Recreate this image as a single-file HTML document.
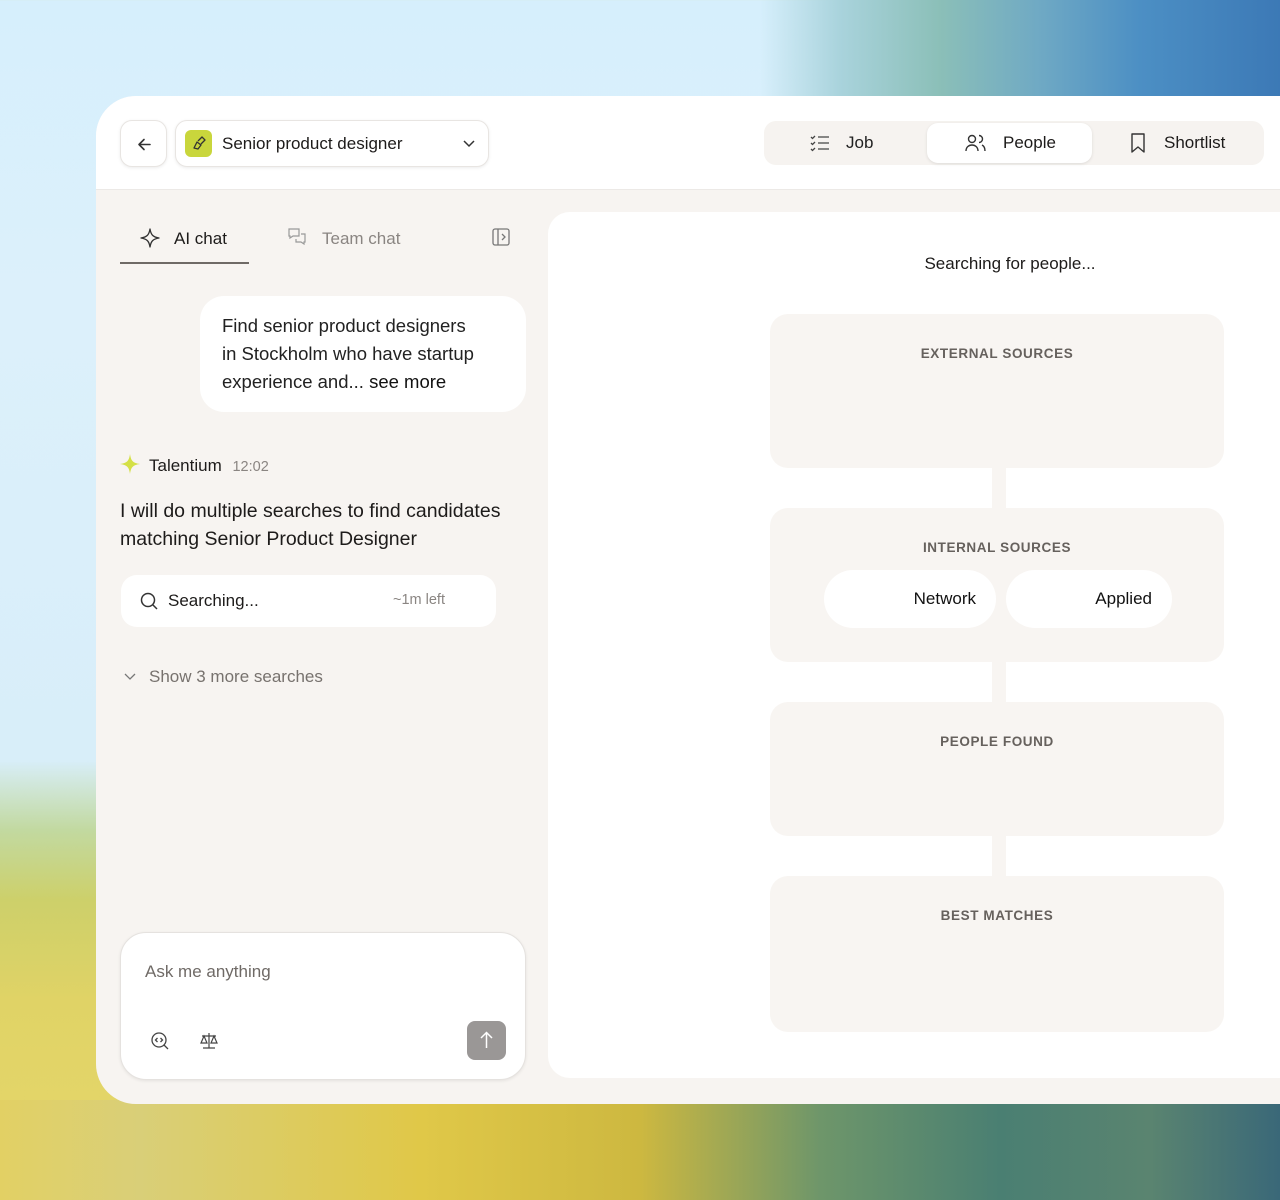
<!DOCTYPE html>
<html><head><style>
*{box-sizing:border-box;margin:0;padding:0}
body{width:1280px;height:1200px;overflow:hidden;position:relative;font-family:"Liberation Sans",sans-serif;color:#1d1b1a;
background:linear-gradient(180deg,#d6effc 0px,#dcf0fb 300px,#d8eef9 760px,#c2d9a0 830px,#cdd06a 900px,#e0d366 1000px,#e6d76a 1200px);}
.bgtop{position:absolute;left:760px;top:0;width:520px;height:100px;background:linear-gradient(90deg,rgba(216,238,250,0) 0,#a9d3dc 80px,#8bbfb8 180px,#6fa9c4 280px,#4c8fc4 380px,#3c79b6 520px)}
.bgbot{position:absolute;left:0;top:1100px;width:1280px;height:100px;background:linear-gradient(90deg,#e2d064 0,#d9cf78 140px,#e0c848 420px,#cdb840 640px,#6e966a 820px,#4a7f72 1000px,#5a8470 1150px,#3a6878 1280px)}
.card{position:absolute;left:96px;top:96px;width:1200px;height:1008px;background:#f7f4f1;border-radius:40px 0 0 40px;overflow:hidden}
.hdr{position:absolute;left:0;top:0;width:100%;height:94px;background:#fff;border-bottom:1px solid #ece9e6}
.btn{position:absolute;background:#fff;border:1px solid #e8e5e2;box-shadow:0 1px 3px rgba(0,0,0,.08)}
.tabs{position:absolute;left:668px;top:25px;width:500px;height:44px;background:#f6f3f0;border-radius:12px}
.tab{position:absolute;top:2px;height:40px;display:flex;align-items:center;font-size:17px}
.right{position:absolute;left:452px;top:116px;width:760px;height:866px;background:#fff;border-radius:22px}
.box{position:absolute;left:222px;width:454px;background:#f8f5f2;border-radius:18px;text-align:center;font-size:13.5px;letter-spacing:.6px;color:#66615d;font-weight:bold}
.conn{position:absolute;left:444px;width:14px;background:#f8f5f2}
.pill{position:absolute;top:62px;height:58px;background:#fff;border-radius:29px;font-size:17px;color:#111;font-weight:normal;letter-spacing:0;display:flex;align-items:center;justify-content:flex-end;padding-right:20px}
</style></head><body>
<div class="bgtop"></div><div class="bgbot"></div>
<div class="card">
 <div class="hdr">
  <div class="btn" style="left:24px;top:24px;width:47px;height:47px;border-radius:12px">
   <svg width="47" height="47" viewBox="0 0 47 47"><path d="M29 23.5H18M23 18.5l-5 5 5 5" stroke="#333" stroke-width="1.6" fill="none" stroke-linecap="round" stroke-linejoin="round"/></svg></div>
  <div class="btn" style="left:79px;top:24px;width:314px;height:47px;border-radius:12px">
   <div style="position:absolute;left:9px;top:9px;width:27px;height:27px;background:#c9d63c;border-radius:6px">
    <svg width="27" height="27" viewBox="0 0 27 27"><path d="M9 18l3-6 4 3-3 4zM13 11l4-4 3 3-4 4" stroke="#333" stroke-width="1.3" fill="none" stroke-linejoin="round"/></svg></div>
   <div style="position:absolute;left:46px;top:13px;font-size:17px">Senior product designer</div>
   <svg style="position:absolute;left:286px;top:15px" width="14" height="14" viewBox="0 0 14 14"><path d="M2 5l5 5 5-5" stroke="#333" stroke-width="1.5" fill="none"/></svg>
  </div>
  <div class="tabs">
   <div class="tab" style="left:46px;color:#222"><svg width="20" height="18" viewBox="0 0 20 18" style="margin-right:16px"><path d="M8 3h11M8 9h11M8 15h11M1 3l1.5 1.5L5 2M1 9l1.5 1.5L5 8M1 15l1.5 1.5L5 14" stroke="#444" stroke-width="1.3" fill="none"/></svg>Job</div>
   <div class="tab" style="left:163px;width:165px;background:#fff;border-radius:11px;box-shadow:0 1px 3px rgba(0,0,0,.1);padding-left:38px"><svg width="22" height="18" viewBox="0 0 22 18" style="margin-right:16px"><circle cx="7" cy="5" r="3.5" stroke="#333" stroke-width="1.4" fill="none"/><path d="M1 17c0-4 3-6 6-6s6 2 6 6M14 1.5a3.5 3.5 0 010 7M17 11c2 1 3 3 3 6" stroke="#333" stroke-width="1.4" fill="none"/></svg>People</div>
   <div class="tab" style="left:366px"><svg width="16" height="20" viewBox="0 0 16 20" style="margin-right:18px"><path d="M2 1h12v18l-6-5-6 5z" stroke="#333" stroke-width="1.4" fill="none" stroke-linejoin="round"/></svg>Shortlist</div>
  </div>
 </div>
 <svg style="position:absolute;left:44px;top:132px" width="20" height="20" viewBox="0 0 20 20"><path d="M10 1C11 7 13 9 19 10 13 11 11 13 10 19 9 13 7 11 1 10 7 9 9 7 10 1z" stroke="#333" stroke-width="1.3" fill="none" stroke-linejoin="round"/></svg>
 <div style="position:absolute;left:78px;top:133px;font-size:17px">AI chat</div>
 <div style="position:absolute;left:24px;top:166px;width:129px;height:2px;background:#6f6a66"></div>
 <svg style="position:absolute;left:191px;top:131px" width="20" height="20" viewBox="0 0 20 20"><path d="M2 2h10v7H6l-3 2V9H2zM14 7h4v8h-1v2l-3-2H9v-3" stroke="#999" stroke-width="1.2" fill="none"/></svg>
 <div style="position:absolute;left:226px;top:133px;font-size:17px;color:#8a8582">Team chat</div>
 <svg style="position:absolute;left:396px;top:132px" width="18" height="18" viewBox="0 0 18 18"><rect x="1" y="1" width="16" height="16" rx="2" stroke="#777" stroke-width="1.3" fill="none"/><path d="M6 1v16M10 6l3 3-3 3" stroke="#777" stroke-width="1.3" fill="none"/></svg>
 <div style="position:absolute;left:104px;top:200px;width:326px;height:116px;background:#fff;border-radius:24px;padding:16px 22px;font-size:18.5px;line-height:28px;color:#222;white-space:nowrap">Find senior product designers<br>in Stockholm who have startup<br>experience and... <span style="color:#111">see more</span></div>
 <svg style="position:absolute;left:24px;top:358px" width="20" height="20" viewBox="0 0 20 20"><path d="M10 0C11 7 13 9 20 10 13 11 11 13 10 20 9 13 7 11 0 10 7 9 9 7 10 0z" fill="#d4e046"/></svg>
 <div style="position:absolute;left:53px;top:360px;font-size:17px">Talentium <span style="font-size:14.5px;color:#8a8582;margin-left:6px">12:02</span></div>
 <div style="position:absolute;left:24px;top:401px;width:420px;font-size:19.5px;line-height:28px;color:#1d1b1a">I will do multiple searches to find candidates matching Senior Product Designer</div>
 <div style="position:absolute;left:25px;top:479px;width:375px;height:52px;background:#fff;border-radius:16px">
  <svg style="position:absolute;left:19px;top:17px" width="18" height="18" viewBox="0 0 18 18"><circle cx="8" cy="8" r="6.5" stroke="#333" stroke-width="1.5" fill="none"/><path d="M13 13l4 4" stroke="#333" stroke-width="1.5"/></svg>
  <div style="position:absolute;left:47px;top:16px;font-size:17px">Searching...</div>
  <div style="position:absolute;left:272px;top:17px;font-size:14.5px;color:#8a8582">~1m left</div>
 </div>
 <svg style="position:absolute;left:28px;top:574px" width="12" height="12" viewBox="0 0 12 12"><path d="M1 4l5 5 5-5" stroke="#777" stroke-width="1.3" fill="none"/></svg>
 <div style="position:absolute;left:53px;top:571px;font-size:17px;color:#77726e">Show 3 more searches</div>
 <div style="position:absolute;left:24px;top:836px;width:406px;height:148px;background:#fff;border-radius:26px;border:1px solid #e5e2df;box-shadow:0 1px 3px rgba(0,0,0,.08)">
  <div style="position:absolute;left:24px;top:29px;font-size:17px;color:#6f6a66">Ask me anything</div>
  <svg style="position:absolute;left:29px;top:98px" width="20" height="20" viewBox="0 0 20 20"><circle cx="9" cy="9" r="7" stroke="#444" stroke-width="1.3" fill="none"/><path d="M14 14l4 4M7.5 7l-2 2 2 2M10.5 7l2 2-2 2" stroke="#444" stroke-width="1.3" fill="none"/></svg>
  <svg style="position:absolute;left:78px;top:98px" width="20" height="20" viewBox="0 0 20 20"><path d="M10 2v15M4 17h12M3 5h14M5 5l-3 7h6zM15 5l-3 7h6z" stroke="#444" stroke-width="1.2" fill="none"/></svg>
  <div style="position:absolute;left:346px;top:88px;width:39px;height:39px;background:#9a9796;border-radius:8px">
   <svg width="39" height="39" viewBox="0 0 39 39"><path d="M19.5 27V12M14 17l5.5-5.5L25 17" stroke="#fff" stroke-width="1.5" fill="none"/></svg></div>
 </div>
 <div class="right">
  <div style="position:absolute;left:0;width:924px;top:42px;text-align:center;font-size:17px">Searching for people...</div>
  <div class="box" style="top:102px;height:154px;padding-top:32px">EXTERNAL SOURCES</div>
  <div class="conn" style="top:256px;height:40px"></div>
  <div class="box" style="top:296px;height:154px;padding-top:32px">INTERNAL SOURCES
   <div class="pill" style="left:54px;width:172px">Network</div>
   <div class="pill" style="left:236px;width:166px">Applied</div>
  </div>
  <div class="conn" style="top:450px;height:40px"></div>
  <div class="box" style="top:490px;height:134px;padding-top:32px">PEOPLE FOUND</div>
  <div class="conn" style="top:624px;height:40px"></div>
  <div class="box" style="top:664px;height:156px;padding-top:32px">BEST MATCHES</div>
 </div>
</div>
</body></html>
